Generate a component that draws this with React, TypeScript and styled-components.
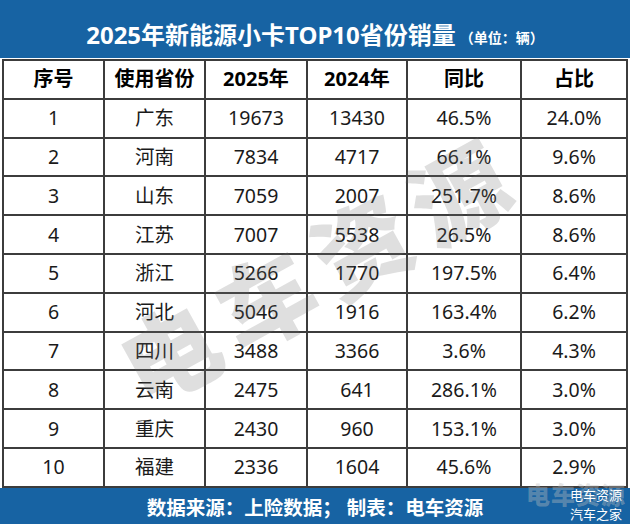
import React from 'react';
import styled, { createGlobalStyle } from 'styled-components';

const GlobalStyle = createGlobalStyle`
  html, body {
    margin: 0;
    padding: 0;
    background: #ffffff;
  }
  body {
    font-family: "Noto Sans", "Noto Sans CJK SC", sans-serif;
  }
`;

type Row = {
  rank: number;
  province: string;
  y2025: string;
  y2024: string;
  yoy: string;
  share: string;
};

const rows: Row[] = [
  { rank: 1, province: '广东', y2025: '19673', y2024: '13430', yoy: '46.5%', share: '24.0%' },
  { rank: 2, province: '河南', y2025: '7834', y2024: '4717', yoy: '66.1%', share: '9.6%' },
  { rank: 3, province: '山东', y2025: '7059', y2024: '2007', yoy: '251.7%', share: '8.6%' },
  { rank: 4, province: '江苏', y2025: '7007', y2024: '5538', yoy: '26.5%', share: '8.6%' },
  { rank: 5, province: '浙江', y2025: '5266', y2024: '1770', yoy: '197.5%', share: '6.4%' },
  { rank: 6, province: '河北', y2025: '5046', y2024: '1916', yoy: '163.4%', share: '6.2%' },
  { rank: 7, province: '四川', y2025: '3488', y2024: '3366', yoy: '3.6%', share: '4.3%' },
  { rank: 8, province: '云南', y2025: '2475', y2024: '641', yoy: '286.1%', share: '3.0%' },
  { rank: 9, province: '重庆', y2025: '2430', y2024: '960', yoy: '153.1%', share: '3.0%' },
  { rank: 10, province: '福建', y2025: '2336', y2024: '1604', yoy: '45.6%', share: '2.9%' },
];

const headers = ['序号', '使用省份', '2025年', '2024年', '同比', '占比'];
const colWidths = [101, 101, 102, 100, 114, 106];

const BLUE = '#1763a3';

const Page = styled.div`
  position: relative;
  width: 630px;
  height: 524px;
  display: flex;
  flex-direction: column;
  overflow: hidden;
  background: #fff;
`;

const TitleBar = styled.div`
  height: 58px;
  flex: none;
  background: ${BLUE};
  display: flex;
  align-items: flex-end;
  justify-content: center;
  padding-bottom: 10px;
  box-sizing: border-box;
  color: #fff;
  font-weight: 700;
`;

const Title = styled.span`
  font-size: 24px;
  line-height: 27px;
`;

const Unit = styled.span`
  font-size: 14px;
  line-height: 21px;
  margin-left: 4px;
`;

const TableWrap = styled.div`
  flex: none;
  padding: 0 2px;
  margin-top: 1px;
`;

const Table = styled.table`
  width: 626px;
  border-collapse: collapse;
  table-layout: fixed;
`;

const TableRow = styled.tr`
  height: 38.8px;
`;

const Cell = styled.td<{ $head?: boolean }>`
  border: 2px solid #3c3c3c;
  text-align: center;
  vertical-align: middle;
  padding: 0;
  font-size: ${(p) => (p.$head ? '20px' : '19.5px')};
  font-weight: ${(p) => (p.$head ? 700 : 400)};
  color: ${(p) => (p.$head ? '#000' : '#1a1a1a')};
  line-height: 24px;
`;

const Footer = styled.div`
  flex: 1;
  background: ${BLUE};
  display: flex;
  align-items: center;
  justify-content: center;
  color: #fff;
  font-size: 19.5px;
  font-weight: 700;
  padding-top: 1px;
`;

const Watermark = styled.div`
  position: absolute;
  left: 318px;
  top: 266px;
  transform: translate(-50%, -50%) rotate(-29deg);
  font-family: "Noto Sans CJK SC", sans-serif;
  font-size: 96px;
  font-weight: 900;
  letter-spacing: 14px;
  color: rgba(110, 110, 110, 0.22);
  white-space: nowrap;
  pointer-events: none;
`;

const GhostMark = styled.div`
  position: absolute;
  right: 4px;
  top: 476px;
  font-family: "Noto Sans CJK SC", sans-serif;
  font-size: 24px;
  font-weight: 900;
  letter-spacing: 1px;
  color: rgba(190, 190, 190, 0.4);
  white-space: nowrap;
`;

const Credit = styled.div`
  position: absolute;
  right: 8px;
  bottom: 1px;
  display: flex;
  flex-direction: column;
  align-items: flex-end;
  font-family: "Noto Sans CJK SC", sans-serif;
  font-size: 13px;
  line-height: 19px;
  color: #fff;
`;

export default function App() {
  return (
    <Page>
      <GlobalStyle />
      <TitleBar>
        <Title>2025年新能源小卡TOP10省份销量</Title>
        <Unit>（单位：辆）</Unit>
      </TitleBar>
      <TableWrap>
        <Table>
          <colgroup>
            {colWidths.map((w, i) => (
              <col key={i} style={{ width: w }} />
            ))}
          </colgroup>
          <thead>
            <TableRow>
              {headers.map((h) => (
                <Cell as="th" key={h} $head>
                  {h}
                </Cell>
              ))}
            </TableRow>
          </thead>
          <tbody>
            {rows.map((r) => (
              <TableRow key={r.rank}>
                <Cell>{r.rank}</Cell>
                <Cell>{r.province}</Cell>
                <Cell>{r.y2025}</Cell>
                <Cell>{r.y2024}</Cell>
                <Cell>{r.yoy}</Cell>
                <Cell>{r.share}</Cell>
              </TableRow>
            ))}
          </tbody>
        </Table>
      </TableWrap>
      <Footer>数据来源：上险数据； 制表：电车资源</Footer>
      <Watermark>电车资源</Watermark>
      <GhostMark>电车资源</GhostMark>
      <Credit>
        <span>电车资源</span>
        <span>汽车之家</span>
      </Credit>
    </Page>
  );
}
